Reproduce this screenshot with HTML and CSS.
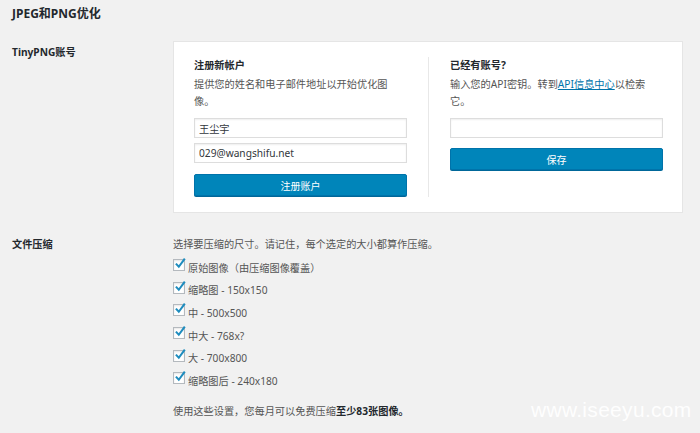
FILE: index.html
```html
<!DOCTYPE html>
<html lang="zh-CN">
<head>
  <meta charset="UTF-8" />
  <title>JPEG和PNG优化</title>
  <link rel="stylesheet" href="styles.css">
</head>
<body>

  <div class="wrap">
    <h2 class="title">JPEG和PNG优化</h2>

    <div class="row account">
      <div class="label">TinyPNG账号</div>
      <div class="field">
        <div class="card">
          <div class="col">
            <h3>注册新帐户</h3>
            <p>提供您的姓名和电子邮件地址以开始优化图像。</p>
            <input type="text" class="text-input" value="王尘宇" />
            <input type="text" class="text-input second" value="029@wangshifu.net" />
            <button class="btn register">注册账户</button>
          </div>
          <div class="divider"></div>
          <div class="col">
            <h3>已经有账号?</h3>
            <p>输入您的API密钥。转到<a href="#">API信息中心</a>以检索它。</p>
            <input type="text" class="text-input" value="" />
            <button class="btn save">保存</button>
          </div>
        </div>
      </div>
    </div>

    <div class="row sizes">
      <div class="label">文件压缩</div>
      <div class="field">
        <p class="desc">选择要压缩的尺寸。请记住，每个选定的大小都算作压缩。</p>
        <ul class="checks">
          <li><span class="box"><svg viewBox="0 0 14 14"><path d="M2.2 6.6 L5.6 10.2 L12.6 0.8" /></svg></span>原始图像（由压缩图像覆盖）</li>
          <li><span class="box"><svg viewBox="0 0 14 14"><path d="M2.2 6.6 L5.6 10.2 L12.6 0.8" /></svg></span>缩略图 - 150x150</li>
          <li><span class="box"><svg viewBox="0 0 14 14"><path d="M2.2 6.6 L5.6 10.2 L12.6 0.8" /></svg></span>中 - 500x500</li>
          <li><span class="box"><svg viewBox="0 0 14 14"><path d="M2.2 6.6 L5.6 10.2 L12.6 0.8" /></svg></span>中大 - 768x?</li>
          <li><span class="box"><svg viewBox="0 0 14 14"><path d="M2.2 6.6 L5.6 10.2 L12.6 0.8" /></svg></span>大 - 700x800</li>
          <li><span class="box"><svg viewBox="0 0 14 14"><path d="M2.2 6.6 L5.6 10.2 L12.6 0.8" /></svg></span>缩略图后 - 240x180</li>
        </ul>
        <p class="note">使用这些设置，您每月可以免费压缩<strong>至少83张图像。</strong></p>
      </div>
    </div>
  </div>

  <div class="watermark">www.iseeyu.com</div>

</body>
</html>
```

FILE: styles.css
```css
body {
  margin: 0;
  background: #f1f1f1;
  color: #555;
  font-family: "Noto Sans", "Noto Sans CJK SC", sans-serif;
  font-size: 10.2px;
  position: relative;
  height: 433px;
  overflow: hidden;
}

.wrap {
  padding-left: 12px;
}

.title {
  margin: 6px 0 0;
  font-size: 12px;
  line-height: 16px;
  font-weight: bold;
  color: #23282d;
}

.row {
  display: flex;
}

.account {
  margin-top: 19px;
}

.label {
  width: 161px;
  flex-shrink: 0;
  font-weight: bold;
  color: #23282d;
  line-height: 17px;
}

.account .label {
  padding-top: 3px;
}

.card {
  width: 510px;
  height: 172px;
  box-sizing: border-box;
  background: #fff;
  border: 1px solid #e5e5e5;
  padding: 15px 19px 0 20px;
  display: flex;
}

.col {
  width: 213px;
  display: flex;
  flex-direction: column;
}

.col h3 {
  margin: 0;
  font-size: 10.2px;
  line-height: 16px;
  font-weight: bold;
  color: #23282d;
}

.col p {
  margin: 3px 0 0;
  line-height: 17px;
}

.col a {
  color: #0073aa;
  text-decoration: underline;
}

.divider {
  width: 1px;
  background: #e8e8e8;
  margin: 0 21px 15px;
}

.text-input {
  margin: 8px 0 0;
  width: 213px;
  height: 20px;
  box-sizing: border-box;
  border: 1px solid #ddd;
  box-shadow: inset 0 1px 2px rgba(0,0,0,0.07);
  padding: 0 4px;
  font-family: inherit;
  font-size: 10.2px;
  color: #32373c;
  background: #fff;
  outline: none;
}

.text-input.second {
  margin-top: 5px;
}

.btn {
  height: 22px;
  width: 213px;
  border: 1px solid #0073aa;
  border-radius: 2px;
  background: #0085ba;
  color: #fff;
  font-family: inherit;
  font-size: 10px;
  padding: 0;
  box-shadow: 0 1px 0 #006799;
}

.register {
  margin-top: 11px;
}

.save {
  margin-top: 10px;
}

.sizes {
  margin-top: 23px;
}

.desc {
  margin: 0 0 3px;
  line-height: 17px;
}

.checks {
  list-style: none;
  margin: 0;
  padding: 0;
}

.checks li {
  height: 22.6px;
  display: flex;
  align-items: center;
}

.box {
  width: 12px;
  height: 12px;
  box-sizing: border-box;
  border: 1px solid #b4b9be;
  background: #fff;
  box-shadow: inset 0 1px 2px rgba(0,0,0,0.1);
  margin-right: 3px;
  position: relative;
  top: -2px;
}

.box svg {
  position: absolute;
  left: 0;
  top: -2px;
  width: 12px;
  height: 12px;
  fill: none;
  stroke: #1e8cbe;
  stroke-width: 2.4;
}

.note {
  margin: 11px 0 0;
  line-height: 17px;
}

.note strong {
  color: #23282d;
}

.watermark {
  position: absolute;
  left: 531px;
  top: 398px;
  font-family: "Liberation Sans", Arial, sans-serif;
  font-size: 21px;
  color: rgba(255,255,255,0.95);
  letter-spacing: 0.3px;
}
```
